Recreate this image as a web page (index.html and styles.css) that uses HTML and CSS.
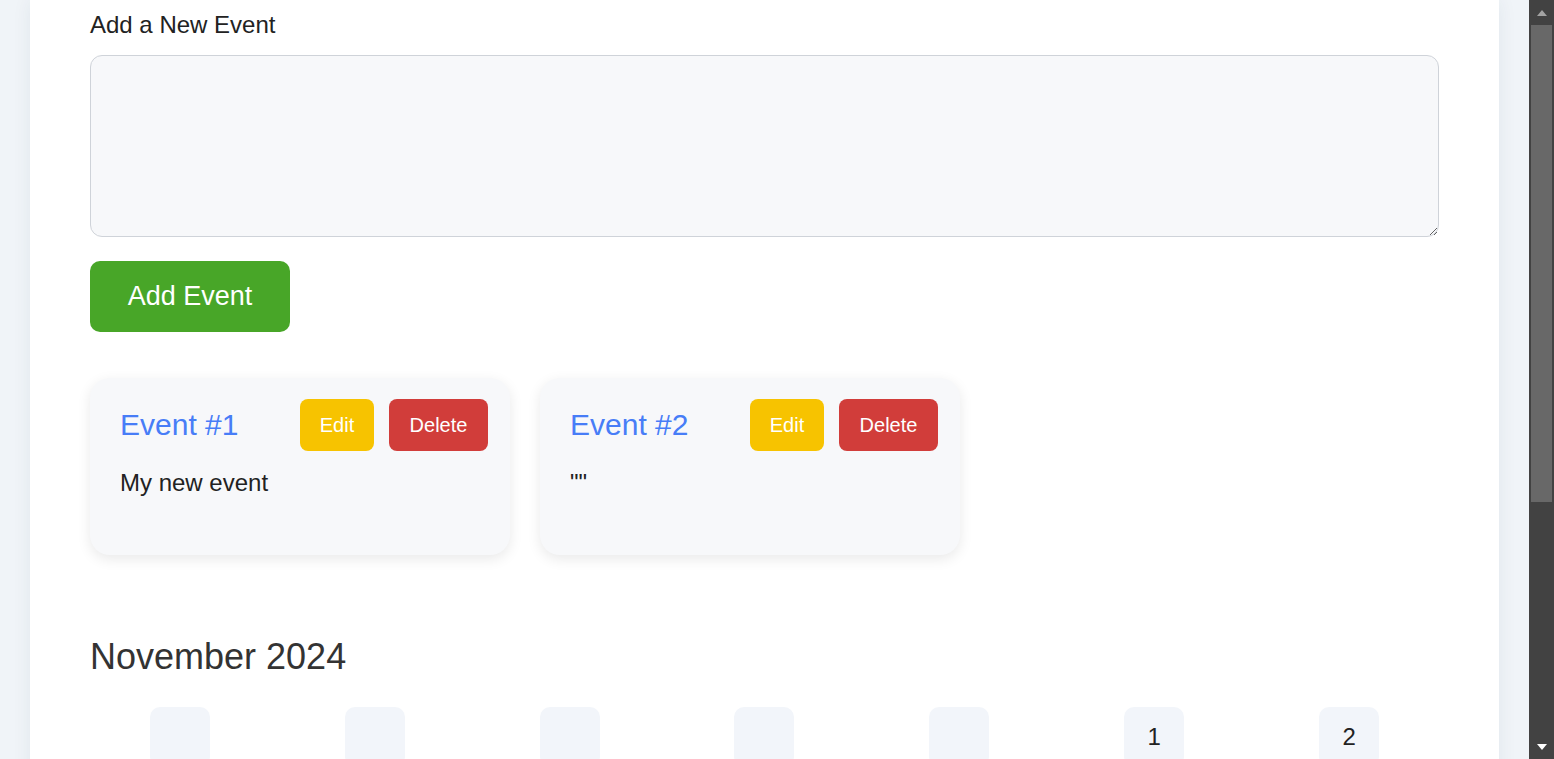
FILE: index.html
```html
<!DOCTYPE html>
<html lang="en">
<head>
<meta charset="utf-8">
<title>Events</title>
<link rel="stylesheet" href="styles.css">
</head>
<body>
<main class="page">
  <div class="container">
    <section class="form">
      <label class="label" for="event-text">Add a New Event</label>
      <textarea id="event-text" class="input"></textarea>
      <button class="add-btn">Add Event</button>
    </section>

    <div class="events">
      <div class="card">
        <div class="card-head">
          <h3 class="card-title">Event #1</h3>
          <div class="actions">
            <button class="btn btn-edit">Edit</button>
            <button class="btn btn-delete">Delete</button>
          </div>
        </div>
        <p class="card-desc">My new event</p>
      </div>
      <div class="card">
        <div class="card-head">
          <h3 class="card-title">Event #2</h3>
          <div class="actions">
            <button class="btn btn-edit">Edit</button>
            <button class="btn btn-delete">Delete</button>
          </div>
        </div>
        <p class="card-desc">""</p>
      </div>
    </div>

    <section class="calendar">
      <h2 class="month">November 2024</h2>
      <div class="grid">
        <div class="day"></div><div class="day"></div><div class="day"></div><div class="day"></div><div class="day"></div><div class="day">1</div><div class="day">2</div>
        <div class="day">3</div><div class="day">4</div><div class="day">5</div><div class="day">6</div><div class="day">7</div><div class="day">8</div><div class="day">9</div>
        <div class="day">10</div><div class="day">11</div><div class="day">12</div><div class="day">13</div><div class="day">14</div><div class="day">15</div><div class="day">16</div>
        <div class="day">17</div><div class="day">18</div><div class="day">19</div><div class="day">20</div><div class="day">21</div><div class="day">22</div><div class="day">23</div>
        <div class="day">24</div><div class="day">25</div><div class="day">26</div><div class="day">27</div><div class="day">28</div><div class="day">29</div><div class="day">30</div>
      </div>
    </section>
  </div>
</main>
<div class="scrollbar" aria-hidden="true">
  <div class="sb-btn"><span class="arrow-up"></span></div>
  <div class="sb-track"><div class="sb-thumb"></div></div>
  <div class="sb-btn"><span class="arrow-down"></span></div>
</div>
</body>
</html>
```

FILE: styles.css
```css
html, body {
  margin: 0;
}

body {
  display: flex;
  align-items: flex-start;
  background: #f0f4f8;
  font-family: "Liberation Sans", Arial, sans-serif;
  color: #222;
}

.page {
  flex: 1;
  min-width: 0;
  padding: 0 30px;
}

.scrollbar {
  flex: 0 0 25px;
  height: 100vh;
  display: flex;
  flex-direction: column;
  background: #424242;
}

.sb-btn {
  height: 25px;
  display: flex;
  align-items: center;
  justify-content: center;
}

.arrow-up {
  width: 0;
  height: 0;
  border-left: 5.5px solid transparent;
  border-right: 5.5px solid transparent;
  border-bottom: 6px solid #a3a3a3;
  margin-top: 1px;
}

.arrow-down {
  width: 0;
  height: 0;
  border-left: 5.5px solid transparent;
  border-right: 5.5px solid transparent;
  border-top: 6px solid #ffffff;
  margin-top: 0;
}

.sb-track {
  flex: 1;
  padding: 0 2px;
}

.sb-thumb {
  height: 477px;
  background: #686868;
}

.container {
  background: #ffffff;
  padding: 11px 60px 60px;
  box-shadow: 0 0 18px rgba(30, 50, 90, 0.07);
}

.form {
  display: flex;
  flex-direction: column;
  align-items: flex-start;
}

.label {
  display: block;
  font-size: 24px;
  color: #222;
  margin-bottom: 16px;
}

.input {
  display: block;
  width: 100%;
  box-sizing: border-box;
  height: 182px;
  margin: 0 0 24px;
  border: 1px solid #cfd3d9;
  border-radius: 12px;
  background: #f7f8fa;
  font-family: inherit;
  font-size: 20px;
  padding: 10px;
}

.add-btn {
  width: 200px;
  height: 71px;
  border: none;
  border-radius: 10px;
  background: #48a628;
  color: #ffffff;
  font-family: inherit;
  font-size: 27px;
  margin: 0 0 46px;
  padding: 0;
}

.events {
  display: flex;
  gap: 30px;
}

.card {
  width: 420px;
  height: 177px;
  box-sizing: border-box;
  padding: 21px 22px 0 30px;
  background: #f7f8fa;
  border-radius: 20px;
  box-shadow: 0 4px 14px rgba(0, 0, 0, 0.09);
}

.card-head {
  display: flex;
  align-items: center;
  justify-content: space-between;
}

.card-title {
  margin: 0;
  font-size: 30px;
  font-weight: normal;
  color: #477df7;
}

.actions {
  display: flex;
  gap: 15px;
}

.btn {
  height: 52px;
  padding: 0;
  border: none;
  border-radius: 8px;
  color: #ffffff;
  font-family: inherit;
  font-size: 20px;
}

.btn-edit {
  width: 74px;
  background: #f7c300;
}

.btn-delete {
  width: 99px;
  background: #d13d3a;
}

.card-desc {
  margin: 18px 0 0;
  font-size: 24px;
  color: #222;
}

.month {
  margin: 81px 0 29px;
  font-size: 36px;
  font-weight: normal;
  color: #333;
}

.grid {
  display: grid;
  grid-template-columns: repeat(7, 1fr);
  column-gap: 15px;
  row-gap: 15px;
  justify-items: center;
}

.day {
  width: 60px;
  height: 60px;
  border-radius: 10px;
  background: #f2f5fa;
  display: flex;
  align-items: center;
  justify-content: center;
  font-size: 24px;
  color: #222;
}
```
